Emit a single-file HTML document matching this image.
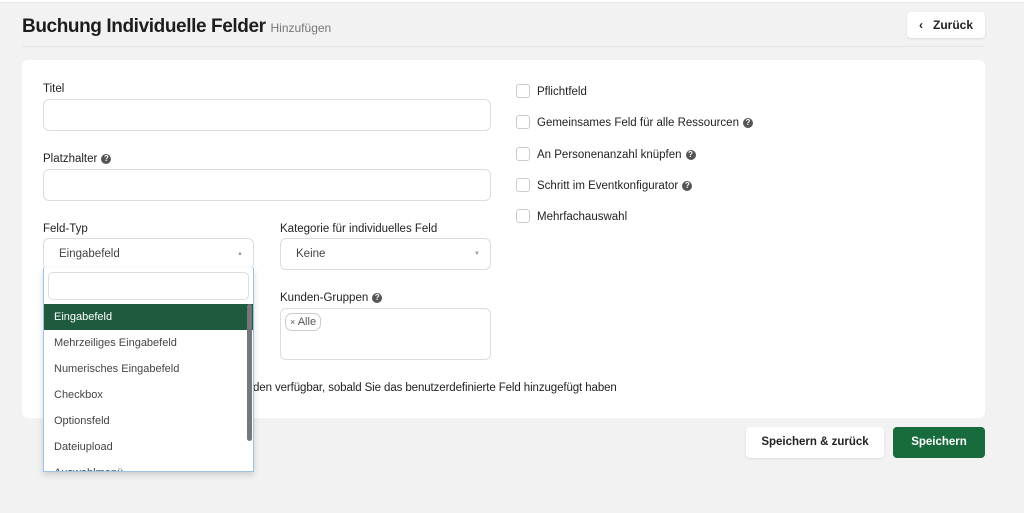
<!DOCTYPE html>
<html><head><meta charset="utf-8"><style>
*{box-sizing:border-box;margin:0;padding:0}
body{width:1024px;height:513px;background:#f1f2f1;font-family:"Liberation Sans",sans-serif;color:#222;position:relative;overflow:hidden;font-size:12px}
.a{position:absolute}
.topline{left:0;top:0;width:1024px;height:3px;background:#fff;border-bottom:1px solid #e4e6e5}
h1{position:absolute;left:22px;top:16px;font-size:19px;font-weight:bold;color:#1d1d1d;letter-spacing:-.4px}
h1 span{font-size:12px;font-weight:normal;color:#777;letter-spacing:0}
.hr{left:22px;top:46px;width:963px;height:1px;background:#e2e4e3}
.back{left:907px;top:12px;width:78px;height:26px;background:#fff;border-radius:4px;box-shadow:0 1px 2px rgba(0,0,0,.1);font-weight:bold;font-size:12px;line-height:26px;text-align:center}
.card{left:22px;top:60px;width:963px;height:358px;background:#fff;border-radius:6px}
.lbl{font-size:11.5px;color:#222}
.inp{background:#fff;border:1px solid #dcdcdc;border-radius:6px}
.cb{width:14px;height:14px;border:1px solid #ccc;border-radius:3px;background:#fff}
.q{display:inline-block;width:10px;height:10px;border-radius:50%;background:#555;color:#fff;font-size:8px;line-height:10px;text-align:center;font-weight:bold;vertical-align:middle;margin-left:4px}
.dd{left:43px;top:268px;width:211px;height:204px;background:#fff;border:1px solid #9cc3e6;border-top:none;box-shadow:0 3px 6px rgba(0,0,0,.15);overflow:hidden}
.dd .it{height:26px;line-height:26px;padding-left:10px;font-size:11px;color:#444}
.btn{top:427px;height:31px;border-radius:4px;font-weight:bold;font-size:11.5px;line-height:31px;text-align:center}
</style></head><body>
<div class="a topline"></div>
<h1>Buchung Individuelle Felder <span>Hinzufügen</span></h1>
<div class="a hr"></div>
<div class="a back"><span style="margin-right:10px">‹</span>Zurück</div>
<div class="a card"></div>

<div class="a lbl" style="left:43px;top:83px">Titel</div>
<div class="a inp" style="left:43px;top:99px;width:448px;height:32px"></div>
<div class="a lbl" style="left:43px;top:153px">Platzhalter<span class="q">?</span></div>
<div class="a inp" style="left:43px;top:169px;width:448px;height:32px"></div>

<div class="a lbl" style="left:43px;top:223px">Feld-Typ</div>
<div class="a inp" style="left:43px;top:238px;width:211px;height:32px;line-height:30px;padding-left:15px;font-size:11.5px;color:#444">Eingabefeld<span style="position:absolute;right:10px;font-size:6px;color:#999">▲</span></div>
<div class="a lbl" style="left:280px;top:223px">Kategorie für individuelles Feld</div>
<div class="a inp" style="left:280px;top:238px;width:211px;height:32px;line-height:30px;padding-left:15px;font-size:11.5px;color:#444">Keine<span style="position:absolute;right:10px;font-size:6px;color:#999">▼</span></div>

<div class="a lbl" style="left:280px;top:292px">Kunden-Gruppen<span class="q">?</span></div>
<div class="a inp" style="left:280px;top:308px;width:211px;height:52px"></div>
<div class="a" style="left:285px;top:313px;border:1px solid #ccc;border-radius:7px;padding:0 4px;font-size:11px;color:#555;line-height:16px"><span style="font-size:9px">×</span> Alle</div>

<div class="a" style="left:253px;top:382px;font-size:11.5px;letter-spacing:-.1px">den verfügbar, sobald Sie das benutzerdefinierte Feld hinzugefügt haben</div>

<div class="a dd">
<div style="margin:4px 4px 4px 4px;height:28px;border:1px solid #ddd;border-radius:5px"></div>
<div class="it" style="background:#1e5a3e;color:#fff">Eingabefeld</div>
<div class="it">Mehrzeiliges Eingabefeld</div>
<div class="it">Numerisches Eingabefeld</div>
<div class="it">Checkbox</div>
<div class="it">Optionsfeld</div>
<div class="it">Dateiupload</div>
<div class="it">Auswahlmenü</div>
<div style="position:absolute;left:203px;top:36px;width:5px;height:137px;background:#777;border-radius:3px"></div>
</div>

<div class="a cb" style="left:516px;top:84px"></div><div class="a lbl" style="left:537px;top:86px">Pflichtfeld</div>
<div class="a cb" style="left:516px;top:115px"></div><div class="a lbl" style="left:537px;top:117px">Gemeinsames Feld für alle Ressourcen<span class="q">?</span></div>
<div class="a cb" style="left:516px;top:147px"></div><div class="a lbl" style="left:537px;top:149px">An Personenanzahl knüpfen<span class="q">?</span></div>
<div class="a cb" style="left:516px;top:178px"></div><div class="a lbl" style="left:537px;top:180px">Schritt im Eventkonfigurator<span class="q">?</span></div>
<div class="a cb" style="left:516px;top:209px"></div><div class="a lbl" style="left:537px;top:211px">Mehrfachauswahl</div>

<div class="a btn" style="left:746px;width:138px;background:#fff;box-shadow:0 1px 2px rgba(0,0,0,.1)">Speichern &amp; zurück</div>
<div class="a btn" style="left:893px;width:92px;background:#176b3c;color:#fff">Speichern</div>
</body></html>
